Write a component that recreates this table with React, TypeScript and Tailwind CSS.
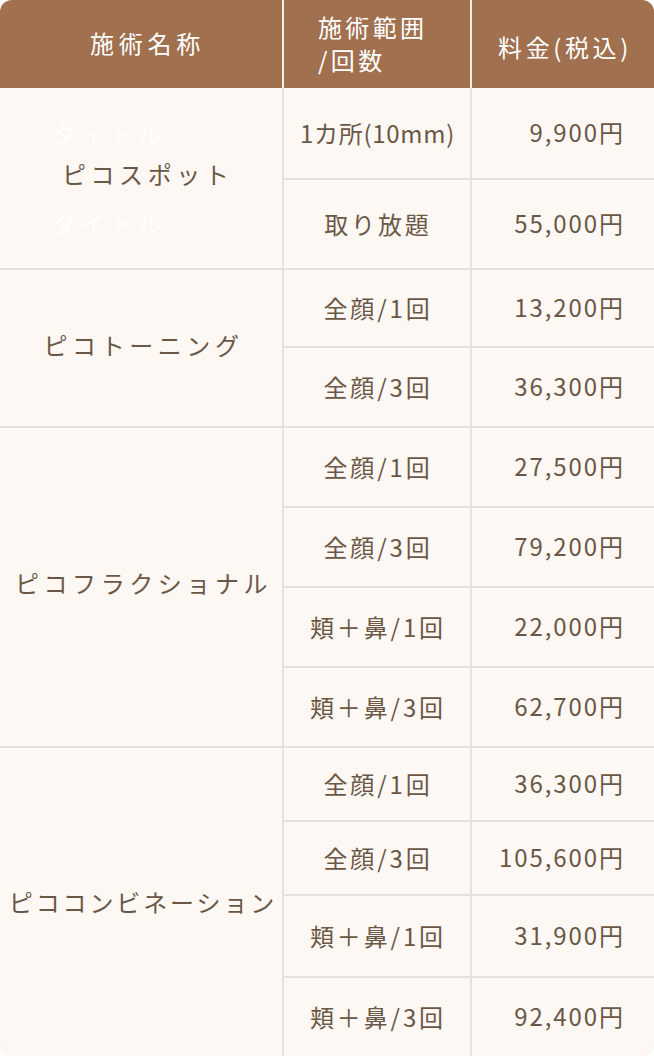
import React from "react";

const font = { fontFamily: '"Noto Sans CJK JP", "Noto Sans", sans-serif' };

type Row = { range: string; price: string };
type Group = { name: string; rows: Row[] };

const groups: Group[] = [
  {
    name: "ピコスポット",
    rows: [
      { range: "1カ所(10mm)", price: "9,900円" },
      { range: "取り放題", price: "55,000円" },
    ],
  },
  {
    name: "ピコトーニング",
    rows: [
      { range: "全顔/1回", price: "13,200円" },
      { range: "全顔/3回", price: "36,300円" },
    ],
  },
  {
    name: "ピコフラクショナル",
    rows: [
      { range: "全顔/1回", price: "27,500円" },
      { range: "全顔/3回", price: "79,200円" },
      { range: "頬＋鼻/1回", price: "22,000円" },
      { range: "頬＋鼻/3回", price: "62,700円" },
    ],
  },
  {
    name: "ピココンビネーション",
    rows: [
      { range: "全顔/1回", price: "36,300円" },
      { range: "全顔/3回", price: "105,600円" },
      { range: "頬＋鼻/1回", price: "31,900円" },
      { range: "頬＋鼻/3回", price: "92,400円" },
    ],
  },
];

const rowStarts = [1, 3, 5, 9];
const spans = ["row-span-2", "row-span-2", "row-span-4", "row-span-4"];
const starts = ["row-start-1", "row-start-3", "row-start-5", "row-start-9"];

export default function App() {
  return (
    <div className="w-[654px] h-[1056px] bg-white" style={font}>
      <div className="w-[654px] overflow-hidden rounded-[12px]">
        {/* header */}
        <div className="grid grid-cols-[282px_186px_182px] gap-x-[2px] bg-[#f6ede6] h-[88px]">
          <div className="bg-[#a0704f] flex items-center justify-center text-white text-[24px] tracking-[0.2em] pl-[13px] pb-[3px]">
            施術名称
          </div>
          <div className="bg-[#a0704f] flex items-center text-white text-[24px] leading-[33px] tracking-[0.14em] pl-[34px] pb-[3px]">
            <div>
              施術範囲
              <br />
              /回数
            </div>
          </div>
          <div className="bg-[#a0704f] flex items-center justify-center text-white text-[24px] tracking-[0.15em] pl-[4px] pt-[5px]">
            料金(税込)
          </div>
        </div>
        {/* body */}
        <div className="grid grid-cols-[282px_186px_182px] grid-rows-[90px_88px_76px_78px_78px_78px_78px_78px_72px_72px_80px_78px] gap-[2px] bg-[#e4e1de] text-[#6b5745]">
          {groups.map((g, gi) => (
            <div
              key={g.name}
              className={`col-start-1 ${starts[gi]} ${spans[gi]} bg-[#fdf8f4] flex flex-col items-center ${
                gi === 0 ? "justify-start" : "justify-center"
              }`}
            >
              {gi === 0 ? (
                <div className="w-full flex flex-col pt-[31px]">
                  <div className="pl-[52px] text-white text-[24px] tracking-[0.19em] leading-[30px]">タイトル</div>
                  <div className="pl-[62px] text-[24px] tracking-[0.19em] leading-[30px] mt-[10px]">{g.name}</div>
                  <div className="pl-[52px] text-white text-[24px] tracking-[0.19em] leading-[30px] mt-[19px]">タイトル</div>
                </div>
              ) : (
                <div
                  className={`text-[24px] whitespace-nowrap ${
                    gi === 3 ? "tracking-[0.12em] pl-[4px]" : "tracking-[0.19em] pl-[5px]"
                  } ${gi === 2 ? "pb-[9px]" : ""} ${gi === 1 ? "pb-[6px]" : ""}`}
                >
                  {g.name}
                </div>
              )}
            </div>
          ))}
          {groups.map((g, gi) =>
            g.rows.map((r, ri) => {
              const rs = rowStarts[gi] + ri;
              const tight = r.range.includes("mm");
              return (
                <React.Fragment key={`${gi}-${ri}`}>
                  <div
                    className={`col-start-2 bg-[#fdf8f4] flex items-center justify-center text-[24px] whitespace-nowrap ${
                      tight ? "tracking-[0.03em] pl-[1px]" : "tracking-[0.12em] pl-[2px]"
                    }`}
                    style={{ gridRowStart: rs }}
                  >
                    {r.range}
                  </div>
                  <div
                    className="col-start-3 bg-[#fdf8f4] flex items-center justify-end pr-[29px] pb-[3px] text-[24px] tracking-[0.08em] whitespace-nowrap"
                    style={{ gridRowStart: rs }}
                  >
                    {r.price}
                  </div>
                </React.Fragment>
              );
            })
          )}
        </div>
      </div>
    </div>
  );
}
